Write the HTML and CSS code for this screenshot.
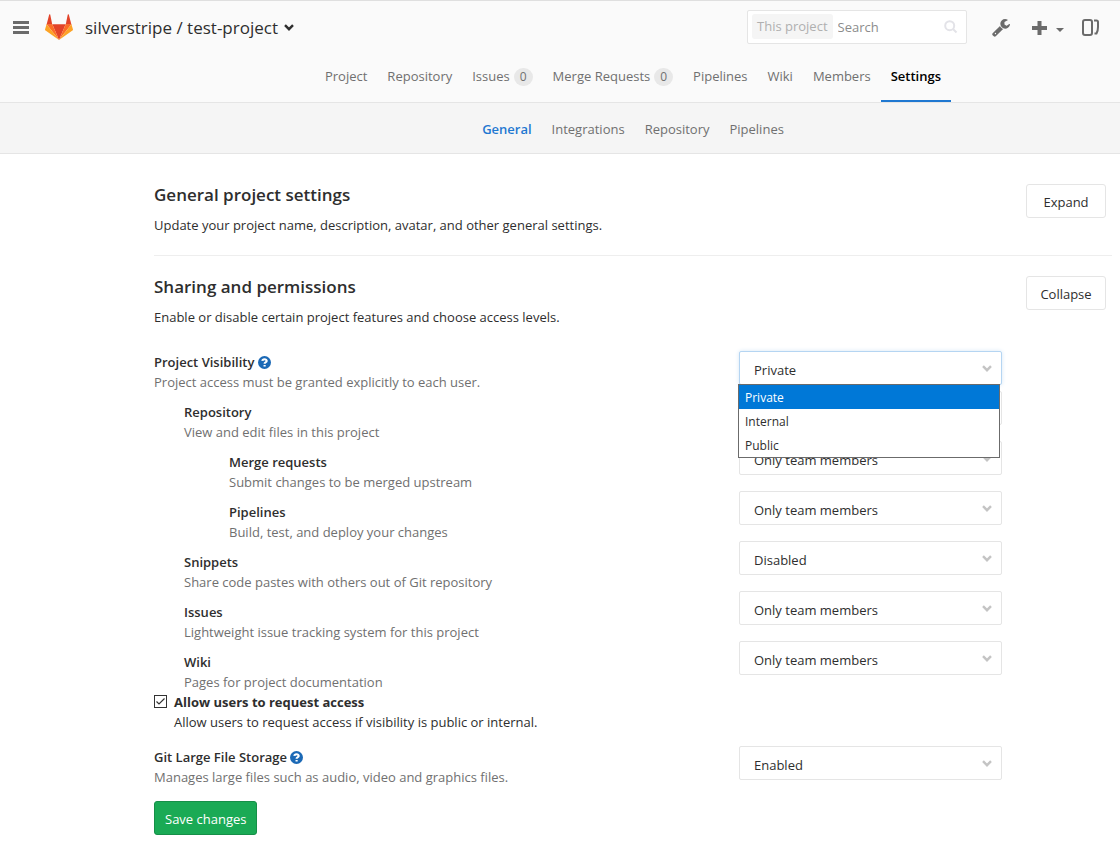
FILE: index.html
```html
<!DOCTYPE html>
<html lang="en">
<head>
<meta charset="utf-8">
<meta name="viewport" content="width=device-width, initial-scale=1">
<title>General settings · silverstripe / test-project</title>
<link rel="stylesheet" href="styles.css">
</head>
<body>
<header class="header">
  <div class="topbar">
    <button class="icon-btn menu-btn" type="button" aria-label="Menu">
      <svg width="16" height="13" viewBox="0 0 16 13"><path d="M0 0h16v3H0zM0 5h16v3H0zM0 10h16v3H0z"/></svg>
    </button>
    <a class="logo" href="#" aria-label="Home">
      <svg width="28" height="26" viewBox="0 0 36 34" preserveAspectRatio="none">
        <path fill="#e24329" d="M2 14l7.4 0L6.7 .8a.7.7 0 0 0-1.3 0z"/>
        <path fill="#e24329" d="M34 14h-7.400L29.300.8a.7.7 0 0 1 1.300 0z"/>
        <path fill="#e24329" d="M18 34l8.600-20.500H9.400z"/>
        <path fill="#fc6d26" d="M18 34L9.400 13.500H2zM18 34l8.600-20.500H34z"/>
        <path fill="#fca326" d="M2 13.500L.1 20a1.500 1.500 0 0 0 .6 1.700L18 34zM34 13.500l1.900 6.500a1.500 1.500 0 0 1-.6 1.700L18 34z"/>
      </svg>
    </a>
    <h1 class="project-title">
      <span><a href="#">silverstripe</a> / <a href="#">test-project</a></span>
      <button class="icon-btn" type="button" aria-label="Switch project"><svg class="title-chevron" width="10" height="7" viewBox="0 0 10 7"><path d="M1 1.200l4 4 4-4"/></svg></button>
    </h1>
    <form class="search">
      <span class="search-scope">This project</span>
      <input class="search-input" type="search" placeholder="Search" aria-label="Search">
      <svg class="search-icon" width="14" height="14" viewBox="0 0 14 14"><circle cx="5.700" cy="5.700" r="4.500"/><path d="M9 9l3.500 3.500"/></svg>
    </form>
    <div class="tools">
      <a class="icon-btn" href="#" aria-label="Admin area">
        <svg width="18" height="18" viewBox="0 0 1664 1664"><path d="M384 1344q0-26-19-45t-45-19-45 19-19 45 19 45 45 19 45-19 19-45zm644-420l-682 682q-37 37-90 37-52 0-91-37L59 1498q-38-36-38-90 0-53 38-91l681-681q39 98 114.500 173.500T1028 924zm634-435q0 39-23 106-47 134-164.500 217.500T1216 896q-185 0-316.500-131.500T768 448t131.500-316.500T1216 0q58 0 121.500 16.500T1445 63q16 11 16 28t-16 28l-293 169v224l193 107q5-3 79-48.500t135.500-81T1630 454q15 0 23.500 10t8.500 25z"/></svg>
      </a>
      <button class="icon-btn plus-btn" type="button" aria-label="New">
        <svg width="15" height="14" viewBox="0 0 15 14"><path d="M5.500 0h4v5H15v4H9.500v5h-4V9H0V5h5.500z"/></svg>
        <svg class="caret" width="8" height="4" viewBox="0 0 8 4"><path d="M0 0h8L4 4z"/></svg>
      </button>
      <button class="icon-btn" type="button" aria-label="Toggle sidebar">
        <svg class="panel-icon" width="18" height="17" viewBox="0 0 18 17"><rect x="1" y="1" width="9" height="15" rx="2"/><path d="M12 1.500h2.500q1.500 0 1.500 1.500v5q0 4-1.500 6.500H12.500"/></svg>
      </button>
    </div>
  </div>
  <nav class="main-nav" aria-label="Project">
    <a href="#">Project</a>
    <a href="#">Repository</a>
    <a href="#">Issues <span class="badge">0</span></a>
    <a href="#">Merge Requests <span class="badge">0</span></a>
    <a href="#">Pipelines</a>
    <a href="#">Wiki</a>
    <a href="#">Members</a>
    <a class="active" href="#" aria-current="page">Settings</a>
  </nav>
</header>
<nav class="sub-nav" aria-label="Settings">
  <a class="active" href="#" aria-current="page">General</a>
  <a href="#">Integrations</a>
  <a href="#">Repository</a>
  <a href="#">Pipelines</a>
</nav>

<main class="content">
  <section class="section">
    <div>
      <h2>General project settings</h2>
      <p>Update your project name, description, avatar, and other general settings.</p>
    </div>
    <button class="btn" type="button">Expand</button>
  </section>
  <section class="section">
    <div>
      <h2>Sharing and permissions</h2>
      <p>Enable or disable certain project features and choose access levels.</p>
    </div>
    <button class="btn" type="button">Collapse</button>
  </section>

  <form class="settings">
    <div class="row">
      <div class="info">
        <label for="visibility">Project Visibility</label>
        <a class="help" href="#" aria-label="Help"><svg width="13" height="13" viewBox="0 0 12 12"><circle cx="6" cy="6" r="6"/><path d="M4 4.600Q4.200 3 6 3t2 1.500Q8 5.300 6.900 5.900 6.100 6.300 6.100 7.200M6.100 8.200v1.500"/></svg></a>
        <p>Project access must be granted explicitly to each user.</p>
      </div>
      <div class="select is-open">
        <select id="visibility"><option>Private</option><option>Internal</option><option>Public</option></select>
        <svg class="chevron" width="10" height="7" viewBox="0 0 10 7"><path d="M1 1.200l4 4 4-4"/></svg>
        <ul class="options" role="listbox" aria-label="Project Visibility">
          <li class="selected" role="option" aria-selected="true">Private</li>
          <li role="option">Internal</li>
          <li role="option">Public</li>
        </ul>
      </div>
    </div>
    <div class="row feature">
      <div class="info level-1"><label for="repository">Repository</label><p>View and edit files in this project</p></div>
      <div class="select"><select id="repository"><option>Only team members</option></select><svg class="chevron" width="10" height="7" viewBox="0 0 10 7"><path d="M1 1.200l4 4 4-4"/></svg></div>
    </div>
    <div class="row feature">
      <div class="info level-2"><label for="merge">Merge requests</label><p>Submit changes to be merged upstream</p></div>
      <div class="select"><select id="merge"><option>Only team members</option></select><svg class="chevron" width="10" height="7" viewBox="0 0 10 7"><path d="M1 1.200l4 4 4-4"/></svg></div>
    </div>
    <div class="row feature">
      <div class="info level-2"><label for="pipelines">Pipelines</label><p>Build, test, and deploy your changes</p></div>
      <div class="select"><select id="pipelines"><option>Only team members</option></select><svg class="chevron" width="10" height="7" viewBox="0 0 10 7"><path d="M1 1.200l4 4 4-4"/></svg></div>
    </div>
    <div class="row feature">
      <div class="info level-1"><label for="snippets">Snippets</label><p>Share code pastes with others out of Git repository</p></div>
      <div class="select"><select id="snippets"><option>Disabled</option></select><svg class="chevron" width="10" height="7" viewBox="0 0 10 7"><path d="M1 1.200l4 4 4-4"/></svg></div>
    </div>
    <div class="row feature">
      <div class="info level-1"><label for="issues">Issues</label><p>Lightweight issue tracking system for this project</p></div>
      <div class="select"><select id="issues"><option>Only team members</option></select><svg class="chevron" width="10" height="7" viewBox="0 0 10 7"><path d="M1 1.200l4 4 4-4"/></svg></div>
    </div>
    <div class="row feature">
      <div class="info level-1"><label for="wiki">Wiki</label><p>Pages for project documentation</p></div>
      <div class="select"><select id="wiki"><option>Only team members</option></select><svg class="chevron" width="10" height="7" viewBox="0 0 10 7"><path d="M1 1.200l4 4 4-4"/></svg></div>
    </div>
    <div class="check">
      <input class="checkbox" type="checkbox" id="access" checked>
      <div>
        <label for="access">Allow users to request access</label>
        <p>Allow users to request access if visibility is public or internal.</p>
      </div>
    </div>
    <div class="row">
      <div class="info">
        <label for="lfs">Git Large File Storage</label>
        <a class="help" href="#" aria-label="Help"><svg width="13" height="13" viewBox="0 0 12 12"><circle cx="6" cy="6" r="6"/><path d="M4 4.600Q4.200 3 6 3t2 1.500Q8 5.300 6.900 5.900 6.100 6.300 6.100 7.200M6.100 8.200v1.500"/></svg></a>
        <p>Manages large files such as audio, video and graphics files.</p>
      </div>
      <div class="select"><select id="lfs"><option>Enabled</option></select><svg class="chevron" width="10" height="7" viewBox="0 0 10 7"><path d="M1 1.200l4 4 4-4"/></svg></div>
    </div>
    <button class="btn btn-save" type="submit">Save changes</button>
  </form>
</main>
</body>
</html>
```
FILE: styles.css
```css
* { box-sizing: border-box; }

body {
  margin: 0;
  background: #fff;
  color: #2e2e2e;
  font: 13px/20px "Open Sans", "Noto Sans", sans-serif;
}

a { color: inherit; text-decoration: none; }
h1, h2, p, ul { margin: 0; padding: 0; }
button, input, select { font: inherit; color: inherit; }
svg { display: block; }

.header {
  background: #fafafa;
  border-top: 1px solid #dfdfdf;
  border-bottom: 1px solid #e5e5e5;
}

.topbar {
  display: flex;
  align-items: center;
  height: 53px;
  padding: 0 20px 2px 13px;
  padding-bottom: 0;
}

.icon-btn {
  display: flex;
  align-items: center;
  padding: 0;
  border: 0;
  background: none;
  color: #6b6b6b;
  fill: #6b6b6b;
}

.logo { margin: 0 12px 2px 16px; }

.project-title {
  display: flex;
  flex: 1;
  align-items: center;
  gap: 6px;
  font-size: 17px;
  font-weight: 400;
  white-space: nowrap;
}

.title-chevron, .chevron {
  fill: none;
  stroke: #2e2e2e;
  stroke-width: 2.4;
}

.search {
  display: flex;
  align-items: center;
  width: 220px;
  height: 34px;
  margin-bottom: 2px;
  padding: 0 8px 0 4px;
  border: 1px solid #e5e5e5;
  border-radius: 2px;
  background: #fff;
}

.search-scope {
  padding: 2px 5px;
  border-radius: 3px;
  background: #f5f5f5;
  color: #b0b0b0;
  white-space: nowrap;
  line-height: 21px;
}

.search-input {
  flex: 1;
  min-width: 0;
  padding: 0 5px;
  border: 0;
  background: none;
  outline: 0;
}

.search-input::placeholder { color: #8c8c8c; opacity: 1; }

.search-icon { fill: none; stroke: #e3e3e8; stroke-width: 2; }

.tools {
  display: flex;
  align-items: center;
  gap: 18px;
  margin-left: 25px;
}

.plus-btn { gap: 9px; margin-left: 4px; }
.caret { margin-top: 4px; }
.panel-icon { fill: none; stroke: #6b6b6b; stroke-width: 2; }

.main-nav, .sub-nav {
  display: flex;
  justify-content: center;
  padding-left: 146px;
  color: #707070;
  white-space: nowrap;
}

.main-nav a {
  display: flex;
  gap: 4px;
  height: 48px;
  padding: 12px 10px 0;
}

.main-nav .active {
  border-bottom: 2px solid #1f78d1;
  color: #000;
  font-weight: 600;
}

.badge {
  align-self: flex-start;
  margin-top: 2px;
  padding: 0 6px;
  border-radius: 9px;
  background: #e8e8e8;
  font-size: 12px;
  line-height: 18px;
}

.sub-nav {
  gap: 20px;
  padding-top: 16px;
  padding-bottom: 14px;
  border-bottom: 1px solid #e5e5e5;
  background: #f5f5f5;
}

.sub-nav .active { color: #1f78d1; font-weight: 600; }

.content { padding: 10px 8px 18px 154px; }

.section {
  display: flex;
  justify-content: space-between;
  align-items: flex-start;
  padding: 20px 6px 20px 0;
}

.section + .section { border-top: 1px solid #eee; }

.section h2 {
  margin-bottom: 9px;
  font-size: 17px;
  font-weight: 600;
  line-height: 22px;
}

.btn {
  height: 34px;
  min-width: 80px;
  padding: 2px 10px 0;
  border: 1px solid #e5e5e5;
  border-radius: 3px;
  background: #fff;
}

.settings { padding-top: 4px; }

.row {
  display: grid;
  grid-template-columns: minmax(0, 1fr) 263px;
  align-items: start;
  padding-right: 110px;
  margin-bottom: 10px;
}

.info { padding-top: 1px; margin-bottom: -1px; }
.info label { font-weight: 600; }
.info p { color: #707070; }
.level-1 { padding-left: 30px; }
.level-2 { padding-left: 75px; }

/* Feature selects sit 10px above their label's line. */
.feature { margin-top: -10px; }
.feature .info { padding-top: 11px; }

.help { display: inline-block; vertical-align: -2px; }
.help svg { fill: #1b69b6; }
.help path { fill: none; stroke: #fff; stroke-width: 2; }

.select { position: relative; height: 34px; }

.select select {
  width: 100%;
  height: 34px;
  padding: 4px 30px 0 14px;
  border: 1px solid #e5e5e5;
  border-radius: 2px;
  background: #fff;
  appearance: none;
}

.is-open select {
  border-color: #b5d5f2;
  box-shadow: 0 0 4px #d5e6f6;
}

.chevron {
  position: absolute;
  top: 14px;
  right: 10px;
  stroke: #c4c4c4;
  pointer-events: none;
}

.options {
  position: absolute;
  z-index: 2;
  top: 33px;
  left: -1px;
  right: 2px;
  border: 1px solid #6b6b6b;
  background: #fff;
  font-size: 12px;
  line-height: 22px;
  list-style: none;
}

.options li { padding: 2px 6px 0; }
.options .selected { background: #0078d7; color: #fff; }

.check {
  display: flex;
  align-items: flex-start;
  gap: 7px;
  margin: -9px 0 14px;
}

.check label { font-weight: 700; }

.checkbox {
  width: 13px;
  height: 13px;
  margin: 3px 0 0;
  border: 1px solid #333;
  appearance: none;
  background: #fff url("data:image/svg+xml,%3Csvg xmlns='http://www.w3.org/2000/svg' viewBox='0 0 11 11'%3E%3Cpath d='M1.500 5.500l2.500 2.500 5.500-5.500' fill='none' stroke='%23333' stroke-width='1.200'/%3E%3C/svg%3E") center / 11px;
}

.row + .btn-save { margin-top: 5px; }

.btn-save {
  border-color: #168f48;
  background: #1aaa55;
  color: #fff;
}
```
